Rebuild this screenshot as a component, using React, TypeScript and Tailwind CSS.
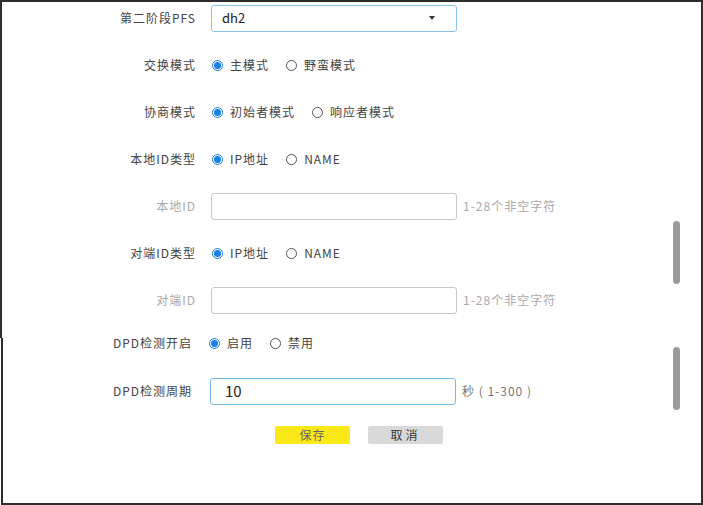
import React from "react";

const font = "font-['Noto_Sans_CJK_SC','Noto_Sans',sans-serif]";

function Radio({ checked, label }: { checked?: boolean; label: string }) {
  return (
    <span className="flex items-center">
      {checked ? (
        <span className="w-[11px] h-[11px] rounded-full border border-[#1b7fe6] flex items-center justify-center">
          <span className="w-[7px] h-[7px] rounded-full bg-[#1b7fe6]" />
        </span>
      ) : (
        <span className="w-[11px] h-[11px] rounded-full border border-[#555]" />
      )}
      <span className="ml-[7px] text-[#444]">{label}</span>
    </span>
  );
}

function Row({
  label,
  dim,
  labelW = "w-[194px]",
  gap = "gap-[15px]",
  h = "h-[28px]",
  children,
}: {
  label: string;
  dim?: boolean;
  labelW?: string;
  gap?: string;
  h?: string;
  children: React.ReactNode;
}) {
  return (
    <div className={`flex items-center ${h} ${gap}`}>
      <div className={`${labelW} text-right ${dim ? "text-[#aaa]" : "text-[#444]"}`}>{label}</div>
      {children}
    </div>
  );
}

function TextBox({ value, active }: { value?: string; active?: boolean }) {
  return (
    <div
      className={`w-[246px] h-[27px] flex items-center pl-[14px] bg-white rounded-[3px] ${
        active ? "border-[1.5px] border-[#73bde6]" : "border border-[#c8c8c8]"
      }`}
    >
      {value && <span className="text-[15px] tracking-normal text-[#222]">{value}</span>}
    </div>
  );
}

export default function App() {
  return (
    <div className={`w-[703px] h-[505px] bg-white flex flex-col text-[12px] tracking-[1px] ${font}`}>
      {/* upper half of the page */}
      <div className="relative h-[338px] border-l-2 border-t-2 border-r-2 border-[#2e2e2e] pt-[2px] flex flex-col gap-[19px]">
        <Row label="第二阶段PFS">
          <div className="w-[246px] h-[27px] flex items-center justify-between pl-[10px] pr-[21px] border border-[#86c5ea] rounded-[3px]">
            <span className="text-[13px] tracking-normal text-[#222]">dh2</span>
            <span className="w-0 h-0 border-l-[3.5px] border-r-[3.5px] border-t-[4px] border-l-transparent border-r-transparent border-t-[#333]" />
          </div>
        </Row>
        <Row label="交换模式">
          <div className="flex items-center gap-[17px] pl-[1px]">
            <Radio checked label="主模式" />
            <Radio label="野蛮模式" />
          </div>
        </Row>
        <Row label="协商模式">
          <div className="flex items-center gap-[17px] pl-[1px]">
            <Radio checked label="初始者模式" />
            <Radio label="响应者模式" />
          </div>
        </Row>
        <Row label="本地ID类型">
          <div className="flex items-center gap-[17px] pl-[1px]">
            <Radio checked label="IP地址" />
            <Radio label="NAME" />
          </div>
        </Row>
        <Row label="本地ID" dim>
          <div className="flex items-center gap-[6px]">
            <TextBox />
            <span className="text-[#aaa]">1-28个非空字符</span>
          </div>
        </Row>
        <Row label="对端ID类型">
          <div className="flex items-center gap-[17px] pl-[1px]">
            <Radio checked label="IP地址" />
            <Radio label="NAME" />
          </div>
        </Row>
        <Row label="对端ID" dim>
          <div className="flex items-center gap-[6px]">
            <TextBox />
            <span className="text-[#aaa]">1-28个非空字符</span>
          </div>
        </Row>
        <div className="absolute left-[671px] top-[219px] w-[7px] h-[63px] rounded-full bg-[#9a9a9a]" />
      </div>

      {/* lower half of the page */}
      <div className="relative flex-1 ml-[1px] border-l-2 border-r-2 border-b-2 border-[#2e2e2e] flex flex-col">
        <Row label="DPD检测开启" labelW="w-[189px]" gap="gap-[17px]" h="h-[10px]">
          <div className="flex items-center gap-[17px]">
            <Radio checked label="启用" />
            <Radio label="禁用" />
          </div>
        </Row>
        <div className="mt-[29px]">
          <Row label="DPD检测周期" labelW="w-[189px]" gap="gap-[17px]">
            <div className="flex items-center gap-[6px] ml-[1px]">
              <TextBox value="10" active />
              <span className="text-[#777]">秒 ( 1-300 )</span>
            </div>
          </Row>
        </div>
        <div className="flex items-center gap-[18px] pl-[272px] mt-[21px]">
          <button className="w-[75px] h-[18px] rounded-[2px] bg-[#fbe818] text-[#666] text-[12px] leading-none">保存</button>
          <button className="w-[75px] h-[18px] rounded-[2px] bg-[#d9d9d9] text-[#333] text-[12px] leading-none tracking-[3px]">取消</button>
        </div>
        <div className="absolute left-[670px] top-[9px] w-[7px] h-[63px] rounded-full bg-[#9a9a9a]" />
      </div>
    </div>
  );
}
